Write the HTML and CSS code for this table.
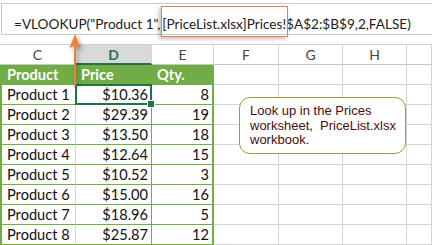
FILE: index.html
```html
<!DOCTYPE html>
<html lang="en">
<head>
  <meta charset="UTF-8">
  <title>VLOOKUP from another workbook</title>
  <link rel="stylesheet" href="styles.css">
</head>
<body>

<!-- Formula bar -->
<div class="formula-bar">
  <span class="formula">=VLOOKUP("Product 1",<span class="ref">[PriceList.xlsx]Prices!</span>$A$2:$B$9,2,FALSE)</span>
</div>

<!-- Sheet -->
<div class="sheet">
  <div class="col-head">C</div>
  <div class="col-head active">D</div>
  <div class="col-head">E</div>
  <div class="col-head">F</div>
  <div class="col-head">G</div>
  <div class="col-head">H</div>
  <div class="col-head"></div>

  <div class="cell th">Product</div>
  <div class="cell th">Price</div>
  <div class="cell th last">Qty.</div>
  <div class="cell"></div><div class="cell"></div><div class="cell"></div><div class="cell"></div>

  <div class="cell td">Product 1</div>
  <div class="cell td num selected">$10.36</div>
  <div class="cell td num last">8</div>
  <div class="cell"></div><div class="cell"></div><div class="cell"></div><div class="cell"></div>

  <div class="cell td">Product 2</div>
  <div class="cell td num">$29.39</div>
  <div class="cell td num last">19</div>
  <div class="cell"></div><div class="cell"></div><div class="cell"></div><div class="cell"></div>

  <div class="cell td">Product 3</div>
  <div class="cell td num">$13.50</div>
  <div class="cell td num last">18</div>
  <div class="cell"></div><div class="cell"></div><div class="cell"></div><div class="cell"></div>

  <div class="cell td">Product 4</div>
  <div class="cell td num">$12.64</div>
  <div class="cell td num last">15</div>
  <div class="cell"></div><div class="cell"></div><div class="cell"></div><div class="cell"></div>

  <div class="cell td">Product 5</div>
  <div class="cell td num">$10.52</div>
  <div class="cell td num last">3</div>
  <div class="cell"></div><div class="cell"></div><div class="cell"></div><div class="cell"></div>

  <div class="cell td">Product 6</div>
  <div class="cell td num">$15.00</div>
  <div class="cell td num last">16</div>
  <div class="cell"></div><div class="cell"></div><div class="cell"></div><div class="cell"></div>

  <div class="cell td">Product 7</div>
  <div class="cell td num">$18.96</div>
  <div class="cell td num last">5</div>
  <div class="cell"></div><div class="cell"></div><div class="cell"></div><div class="cell"></div>

  <div class="cell td">Product 8</div>
  <div class="cell td num">$25.87</div>
  <div class="cell td num last">12</div>
  <div class="cell"></div><div class="cell"></div><div class="cell"></div><div class="cell"></div>
</div>

<!-- Arrow pointing at the lookup value -->
<svg class="arrow" width="20" height="60" viewBox="0 0 20 60">
  <line x1="7" y1="10" x2="7" y2="52" stroke="#f07f3a" stroke-width="2"/>
  <path d="M7 0 L12.5 14 L7 11.5 L1.5 14 Z" fill="#f07f3a"/>
</svg>

<!-- Callout -->
<div class="callout">
  Look up in the Prices<br>
  worksheet,&nbsp; PriceList.xlsx<br>
  workbook.
</div>

</body>
</html>
```

FILE: styles.css
```css
* { box-sizing: border-box; margin: 0; padding: 0; }
body {
  font-family: Lato, "Liberation Sans", sans-serif;
  background: #fff;
  width: 432px;
  height: 245px;
  overflow: hidden;
  position: relative;
}

.formula-bar {
  margin-top: 3px;
  margin-left: 1px;
  height: 32px;
  border: 1px solid #c8c8c8;
  border-right: none;
  padding: 12px 0 0 12px;
  font-size: 13.6px;
  color: #222;
  white-space: nowrap;
}

.formula .ref {
  position: relative;
  margin-left: 2px;
}

.formula .ref::after {
  content: '';
  position: absolute;
  left: -1px; right: -2px;
  top: -10px; bottom: -5px;
  border: 1.5px solid #f07f3a;
  box-shadow: -2px 2px 4px rgba(0,0,0,0.25);
}

.sheet {
  margin-top: 9px;
  display: grid;
  grid-template-columns: 76px 76px 62px 65px 64px 64px 25px;
  grid-auto-rows: 20px;
  border-top: 1px solid #d0d0d0;
}

.col-head {
  border-right: 1px solid #d4d4d4;
  border-bottom: 1px solid #c6c6c6;
  text-align: center;
  font-size: 14px;
  line-height: 19px;
  color: #444;
}

.col-head.active {
  background: #d9d9d9;
  color: #217346;
  font-weight: bold;
  border-bottom: 2px solid #217346;
}

.cell {
  border-right: 1px solid #d4d4d4;
  border-bottom: 1px solid #d4d4d4;
  font-size: 14.6px;
  line-height: 20px;
  padding: 0 3px 0 5px;
  white-space: nowrap;
  color: #111;
}

.th {
  background: #70ad47;
  color: #fff;
  font-weight: bold;
  border-bottom: 1px solid #70ad47;
  border-right-color: #70ad47;
}

.td {
  border-bottom: 1.5px solid #70ad47;
}

.td:nth-child(7n+2) { border-right-color: #70ad47; }

.th:nth-child(7n+1), .td:nth-child(7n+1) {
  border-left: 2px solid #70ad47;
}

.last { border-right: 2px solid #70ad47; }

.num { text-align: right; }

.selected {
  position: relative;
}

.selected::after {
  content: '';
  position: absolute;
  left: -1px; top: -1px; right: -1px; bottom: -1px;
  border: 2px solid #217346;
}

.selected::before {
  content: '';
  position: absolute;
  right: -4px; bottom: -4px;
  width: 6px; height: 6px;
  background: #217346;
  border: 1px solid #fff;
  z-index: 1;
}

.arrow {
  position: absolute;
  left: 68px;
  top: 34px;
  overflow: visible;
  filter: drop-shadow(2px 2px 2px rgba(0,0,0,0.35));
}

.callout {
  position: absolute;
  left: 239px;
  top: 97px;
  width: 167px;
  height: 57px;
  background: #fff;
  border: 1.5px solid #9d9b3e;
  border-radius: 11px;
  padding: 6px 0 0 10px;
  font-family: "Liberation Sans", Arial, sans-serif;
  font-size: 13px;
  line-height: 14.5px;
  color: #4a0d0d;
}
```
